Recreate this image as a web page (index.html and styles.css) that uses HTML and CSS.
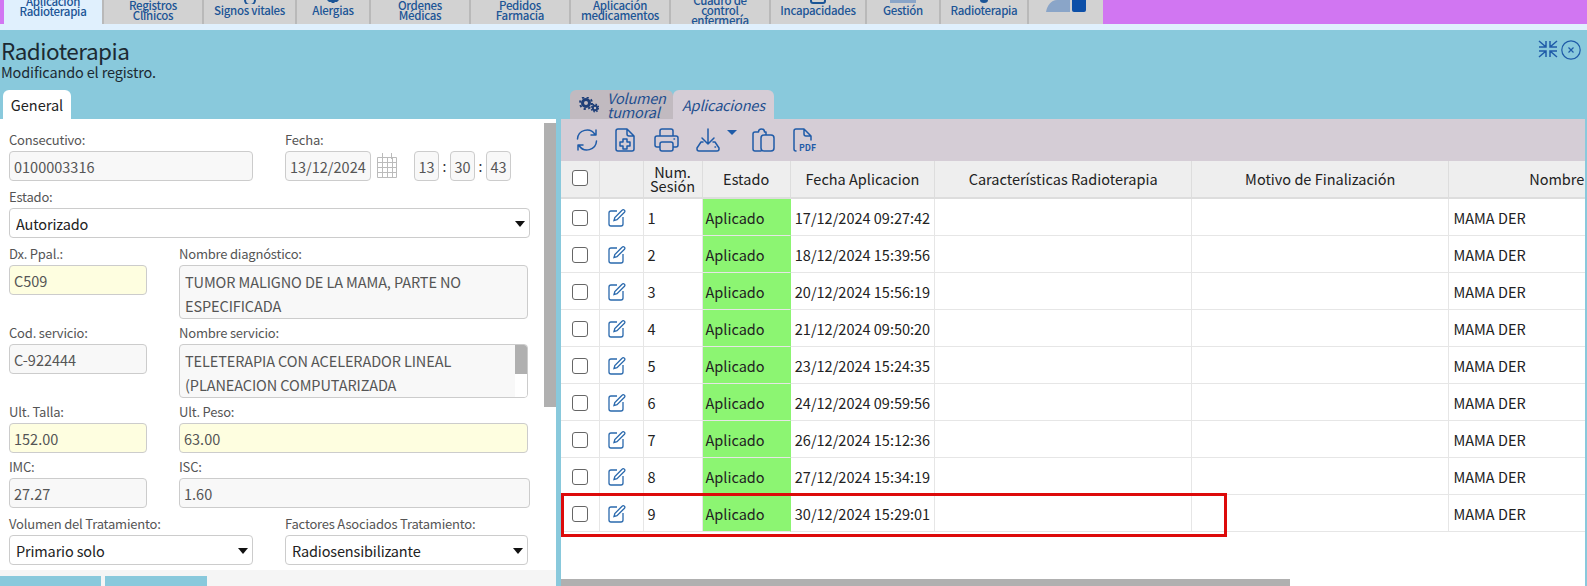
FILE: index.html
```html
<!DOCTYPE html>
<html lang="es">
<head>
<meta charset="utf-8">
<title>Radioterapia</title>
<link rel="stylesheet" href="styles.css">
</head>
<body>
<nav class="nav">
  <a class="tab active t-a">Aplicación Radioterapia</a>
  <a class="tab t-b">Registros Clínicos</a>
  <a class="tab t-c"><svg class="peek" width="14" height="4" viewBox="0 0 14 4"><path d="M2 0a5 5 0 0 0 10 0" fill="none" stroke="#1c5596" stroke-width="2"/></svg>Signos vitales</a>
  <a class="tab t-d"><svg class="peek" width="14" height="3" viewBox="0 0 14 3"><path d="M1 0h12l-2 2H9L8 3H6L5 2H3z" fill="#1c5596"/></svg>Alergias</a>
  <a class="tab t-e">Ordenes Médicas</a>
  <a class="tab t-f">Pedidos Farmacia</a>
  <a class="tab t-e">Aplicación medicamentos</a>
  <a class="tab t-e t-tight">Cuadro de control enfermería</a>
  <a class="tab t-g"><svg class="peek" width="16" height="4" viewBox="0 0 16 4"><path d="M1 0v1a2 2 0 0 0 2 2h10a2 2 0 0 0 2-2V0" fill="none" stroke="#1c5596" stroke-width="2"/></svg>Incapacidades</a>
  <a class="tab t-h"><svg class="peek" width="26" height="3" viewBox="0 0 26 3"><path d="M0 0h26v3H0z" fill="#8aa5c8"/></svg>Gestión</a>
  <a class="tab t-i"><svg class="peek" width="8" height="3" viewBox="0 0 8 3"><path d="M0 0h8a4 3 0 0 1-8 0z" fill="#1c5596"/></svg>Radioterapia</a>
  <a class="tab t-j"><svg class="user" width="40" height="12" viewBox="0 0 40 12"><path d="M0 12C1 6 5 0 11 0h13v12z" fill="#8aa5c8"/><path d="M26 0h14v10a2 2 0 0 1-2 2H28a2 2 0 0 1-2-2z" fill="#0c4fa8"/></svg></a>
</nav>
<div class="strip"></div>
<main class="main">
  <header class="head">
    <div>
      <h1 class="title">Radioterapia</h1>
      <p class="subtitle">Modificando el registro.</p>
    </div>
    <div class="head-icons">
      <svg width="20" height="18" viewBox="0 0 20 18" fill="none" stroke="#1f5ba8" stroke-width="1.5"><path d="M8 1v6H1M8 7 1 1M12 1v6h7M12 7l7-6M8 17v-6H1M8 11l-7 6M12 17v-6h7M12 11l7 6"/></svg>
      <svg width="20" height="20" viewBox="0 0 20 20" fill="none" stroke="#1f5ba8" stroke-width="1.2"><circle cx="10" cy="10" r="9.2"/><path d="m7.500 7.500 5 5m0-5-5 5"/></svg>
    </div>
  </header>
  <div class="columns">
    <section class="left">
      <div class="tabs"><span class="ltab">General</span></div>
      <div class="panel">
        <form class="form">
          <div class="row r-half gap7">
            <div class="field"><label>Consecutivo:</label><input class="inp" readonly value="0100003316"></div>
            <div class="field">
              <label>Fecha:</label>
              <div class="dt">
                <input class="inp date" readonly value="13/12/2024">
                <svg class="cal" width="20" height="27" viewBox="0 0 20 27" fill="none" stroke="#bbb" stroke-width="1"><path d="M.5 5.500h19v20H.5zM.5 10.500h19M.5 15.500h19M.5 20.500h19M5.500 5.500v20M10.500 5.500v20M15.500 5.500v20M5.500 1v6M14.500 1v6"/></svg>
                <input class="inp time t1" readonly value="13"><span class="colon">:</span><input class="inp time" readonly value="30"><span class="colon">:</span><input class="inp time" readonly value="43">
              </div>
            </div>
          </div>
          <div class="field gap7 r-full"><label>Estado:</label><div class="sel"><select><option>Autorizado</option></select></div></div>
          <div class="row r-narrow gap5">
            <div class="field"><label>Dx. Ppal.:</label><input class="inp yellow" readonly value="C509"></div>
            <div class="field"><label>Nombre diagnóstico:</label><div class="area a-short">TUMOR MALIGNO DE LA MAMA, PARTE NO ESPECIFICADA</div></div>
          </div>
          <div class="row r-narrow gap5">
            <div class="field"><label>Cod. servicio:</label><input class="inp" readonly value="C-922444"></div>
            <div class="field"><label>Nombre servicio:</label><div class="area a-scroll"><div class="area-text">TELETERAPIA CON ACELERADOR LINEAL (PLANEACION COMPUTARIZADA</div><div class="area-bar"><i></i></div></div></div>
          </div>
          <div class="row r-narrow gap5">
            <div class="field"><label>Ult. Talla:</label><input class="inp yellow" readonly value="152.00"></div>
            <div class="field"><label>Ult. Peso:</label><input class="inp yellow" readonly value="63.00"></div>
          </div>
          <div class="row r-wide gap7">
            <div class="field"><label>IMC:</label><input class="inp" readonly value="27.27"></div>
            <div class="field"><label>ISC:</label><input class="inp" readonly value="1.60"></div>
          </div>
          <div class="row r-half">
            <div class="field"><label>Volumen del Tratamiento:</label><div class="sel"><select><option>Primario solo</option></select></div></div>
            <div class="field f-short"><label>Factores Asociados Tratamiento:</label><div class="sel"><select><option>Radiosensibilizante</option></select></div></div>
          </div>
        </form>
        <div class="vbar"></div>
      </div>
      <div class="foot"><span class="fbtn b1"></span><span class="fbtn b2"></span></div>
    </section>
    <section class="right">
      <div class="rtabs">
        <span class="rtab off">
          <svg width="20" height="16" viewBox="0 0 20 16" fill="none" stroke="#1f3f78"><circle cx="7" cy="6" r="3.500" stroke-width="3"/><circle cx="7" cy="6" r="6" stroke-width="2" stroke-dasharray="2.200 2.500"/><circle cx="16" cy="11" r="2.200" stroke-width="2"/><circle cx="16" cy="11" r="3.800" stroke-width="1.400" stroke-dasharray="1.500 1.500"/></svg>
          <em>Volumen<br>tumoral</em>
        </span>
        <span class="rtab on"><em>Aplicaciones</em></span>
      </div>
      <div class="toolbar">
        <svg class="ic m14" width="24" height="24" viewBox="0 0 24 24"><path d="M2.500 11A9.500 9.500 0 0 1 20 6.500M21 2v5h-5M21.500 13A9.500 9.500 0 0 1 4 17.500M3 22v-5h5"/></svg>
        <svg class="ic m16" width="20" height="24" viewBox="0 0 20 24"><path d="M4 1h8l7 7v13a2 2 0 0 1-2 2H3a2 2 0 0 1-2-2V3a2 2 0 0 1 2-2zM12 1v5a2 2 0 0 0 2 2h5M8 11h4v3h3v4h-3v3H8v-3H5v-4h3z"/></svg>
        <svg class="ic m19" width="25" height="24" viewBox="0 0 25 24"><path d="M6 8V3a2 2 0 0 1 2-2h9a2 2 0 0 1 2 2v5M6 19H3a2 2 0 0 1-2-2v-7a2 2 0 0 1 2-2h19a2 2 0 0 1 2 2v7a2 2 0 0 1-2 2h-3M8 14h9a2 2 0 0 1 2 2v5a2 2 0 0 1-2 2H8a2 2 0 0 1-2-2v-5a2 2 0 0 1 2-2zM20 11h.5"/></svg>
        <svg class="ic m17" width="24" height="24" viewBox="0 0 24 24"><path d="M12 1v15M6 10l6 6 6-6M7 14H5l-4 6v1a2 2 0 0 0 2 2h18a2 2 0 0 0 2-2v-1l-4-6h-2M19 19h.5"/></svg>
        <span class="caret"></span>
        <svg class="ic m14" width="24" height="24" viewBox="0 0 24 24"><path d="M6 4H4a2 2 0 0 0-2 2v15a2 2 0 0 0 2 2h6M6 4h1.500a3 3 0 0 1 6 0H15v3M14 7h6a3 3 0 0 1 3 3v10a3 3 0 0 1-3 3h-7a3 3 0 0 1-3-3V10a3 3 0 0 1 3-3z"/></svg>
        <svg class="ic m18" width="24" height="24" viewBox="0 0 24 24"><path d="M3 23a2 2 0 0 1-2-2V3a2 2 0 0 1 2-2h8l7 7v4M11 1v5a2 2 0 0 0 2 2h5"/><text class="pdf" x="6" y="23" textLength="17" lengthAdjust="spacingAndGlyphs">PDF</text></svg>
      </div>
      <div class="grid-wrap">
        <table class="grid">
          <colgroup><col class="c1"><col class="c2"><col class="c3"><col class="c4"><col class="c5"><col class="c6"><col class="c7"><col class="c8"></colgroup>
          <thead>
            <tr><th><input type="checkbox" class="chk chk-head"></th><th></th><th class="tight">Num. Sesión</th><th>Estado</th><th>Fecha Aplicacion</th><th>Características Radioterapia</th><th>Motivo de Finalización</th><th>Nombre</th></tr>
          </thead>
          <tbody id="rows"></tbody>
        </table>
        <div class="mark"></div>
      </div>
      <div class="hbar-track"><div class="hbar"></div></div>
    </section>
  </div>
</main>
<script src="rows.js"></script>
</body>
</html>
```
FILE: rows.js
```js
var dates = ["17/12/2024 09:27:42","18/12/2024 15:39:56","20/12/2024 15:56:19","21/12/2024 09:50:20","23/12/2024 15:24:35","24/12/2024 09:59:56","26/12/2024 15:12:36","27/12/2024 15:34:19","30/12/2024 15:29:01"];
var pencil = '<svg class="pen" width="18" height="19" viewBox="0 0 18 19" fill="none" stroke="#2a69ad" stroke-width="1.300"><path d="M9 3H3a2 2 0 0 0-2 2v11a2 2 0 0 0 2 2h10a2 2 0 0 0 2-2V9"/><path d="M6 12.500l.8-3L14.300 2a1.300 1.300 0 0 1 1.900 0l.3.300a1.300 1.300 0 0 1 0 1.900L9 11.700z"/></svg>';
document.getElementById("rows").innerHTML = dates.map(function (d, i) {
  return '<tr><td class="mid"><input type="checkbox" class="chk chk-row"></td><td class="mid pen-cell">' + pencil + '</td><td>' + (i + 1) + '</td><td class="ok">Aplicado</td><td class="nowrap">' + d + '</td><td></td><td></td><td>MAMA DER</td></tr>';
}).join("");
```
FILE: styles.css
```css
* { box-sizing: border-box; }
html, body { margin: 0; height: 586px; overflow: hidden; }
body { font-family: "Noto Sans CJK SC", "Noto Sans", sans-serif; font-size: 14px; color: #222; background: #fff; }

.nav { display: flex; height: 24px; padding-left: 4px; background: #d176f2; overflow: hidden; }
.tab { position: relative; display: flex; align-items: center; justify-content: center; height: 24px; padding: 0 6px 5px; background: #d2d2d2; border-right: 2px solid #b9b9b9; color: #1c5596; font-size: 11.500px; font-weight: 500; letter-spacing: -0.3px; line-height: 10px; text-align: center; }
.tab.active { background: #e0f0fd; padding-bottom: 13px; padding-left: 16px; padding-right: 16px; }
.t-a { width: 100px; } .t-b { width: 100px; } .t-c { width: 93px; } .t-d { width: 74px; }
.t-e { width: 100px; } .t-f { width: 100px; } .t-g { width: 96px; } .t-h { width: 74px; }
.t-i { width: 88px; } .t-j { width: 74px; border-right: 0; }
.t-tight { padding-left: 18px; padding-right: 18px; }
.peek { position: absolute; top: 0; left: 50%; transform: translateX(-50%); }
.user { position: absolute; top: 0; left: 17px; }

.strip { height: 6px; background: #e0f0fd; }
.main { height: 556px; background: #89c9dc; }
.head { display: flex; justify-content: space-between; height: 60px; padding: 8px 6px 0 0; }
.title { margin: 0 0 0 1px; font-size: 22.500px; font-weight: 400; letter-spacing: -0.5px; line-height: 25px; color: #1c2a33; }
.subtitle { margin: 0 0 0 1px; font-size: 14.500px; letter-spacing: -0.15px; line-height: 17px; color: #1c2a33; }
.head-icons { display: flex; gap: 3px; align-items: flex-start; margin-top: 2px; }

.columns { display: flex; height: 496px; gap: 5px; }
.left { width: 556px; display: flex; flex-direction: column; flex: none; }
.tabs { height: 29px; padding-left: 3px; display: flex; }
.ltab { width: 68px; height: 29px; background: #fff; border-radius: 6px 6px 0 0; line-height: 29px; text-align: center; font-size: 14.500px; color: #222; }
.panel { flex: none; height: 451px; background: #fff; display: flex; }
.form { width: 544px; padding: 12px 0 0 9px; }
.vbar { width: 12px; height: 284px; margin-top: 4px; background: #b0b0b0; }
.foot { flex: 1; background: #f5f5f5; display: flex; gap: 4px; padding-top: 6px; overflow: hidden; }
.fbtn { display: block; height: 16px; background: #89c9dc; }
.b1 { width: 101px; } .b2 { width: 102px; }

.row { display: grid; column-gap: 32px; }
.r-half { grid-template-columns: 244px 245px; }
.r-narrow { grid-template-columns: 138px 349px; }
.r-wide { grid-template-columns: 138px 351px; }
.r-full { width: 521px; }
.gap7 { margin-bottom: 7px; }
.gap5 { margin-bottom: 5px; }
.field { min-width: 0; }
.f-short { width: 243px; }
label { display: block; height: 20px; line-height: 18px; font-size: 13px; letter-spacing: -0.2px; color: #555; }

.inp { display: block; width: 100%; height: 30px; padding: 0 4px; border: 1px solid #ccc; border-radius: 4px; background: #f8f8f8; font: inherit; font-size: 14.500px; color: #555; outline: none; }
.yellow { background: #fefee0; }
.dt { display: flex; align-items: center; }
.date { width: 86px; flex: none; }
.cal { margin: -2px 0 0 6px; flex: none; }
.time { width: 25px; flex: none; padding: 0; text-align: center; }
.t1 { margin-left: 17px; }
.colon { width: 11px; text-align: center; color: #333; font-size: 14px; }

.sel { position: relative; }
.sel select { display: block; width: 100%; height: 30px; padding: 0 6px; border: 1px solid #ccc; border-radius: 4px; background: #fff; appearance: none; font: inherit; font-size: 14.500px; letter-spacing: -0.15px; color: #222; }
.sel::after { content: ""; position: absolute; right: 5px; top: 13px; border: 5px solid transparent; border-top: 6px solid #111; border-bottom: 0; }

.area { border: 1px solid #ccc; border-radius: 4px; background: #f8f8f8; color: #555; font-size: 14.500px; letter-spacing: -0.1px; line-height: 24px; overflow: hidden; }
.a-short { height: 54px; padding: 4px 5px 0; }
.a-scroll { height: 54px; display: flex; }
.area-text { flex: 1; padding: 4px 5px 0; }
.area-bar { width: 12px; background: #fff; flex: none; }
.area-bar i { display: block; height: 29px; background: #b0b0b0; }

.right { flex: 1; display: flex; flex-direction: column; margin-right: 2px; min-width: 0; }
.rtabs { display: flex; height: 29px; padding-left: 9px; }
.rtab { display: flex; align-items: center; height: 29px; border-radius: 6px 6px 0 0; color: #1f4f8f; overflow: hidden; }
.rtab em { font-size: 14.500px; letter-spacing: -0.2px; line-height: 14px; }
.off { width: 103px; background: #c1bac0; padding: 0 0 0 9px; gap: 8px; }
.on { width: 101px; background: #d5cdd6; padding-left: 9px; }
.on em { line-height: 29px; }

.toolbar { display: flex; align-items: flex-start; height: 42px; padding-top: 9px; background: #d5cdd6; }
.ic { flex: none; fill: none; stroke: #1f5ba8; stroke-width: 1.5; stroke-linecap: round; stroke-linejoin: round; }
.m14 { margin-left: 14px; } .m16 { margin-left: 16px; } .m17 { margin-left: 17px; } .m18 { margin-left: 18px; } .m19 { margin-left: 19px; }
.caret { margin: 2px 0 0 7px; border: 5px solid transparent; border-top: 5px solid #1f5ba8; border-bottom: 0; }
.pdf { font-size: 9px; font-weight: 700; fill: #1f5ba8; stroke: none; }

.grid-wrap { position: relative; flex: 1; background: #fff; overflow: hidden; }
.grid { border-collapse: separate; border-spacing: 0; table-layout: fixed; width: 1103px; }
.c1 { width: 39px; } .c2 { width: 43.500px; } .c3 { width: 59px; } .c4 { width: 88.300px; }
.c5 { width: 144.300px; } .c6 { width: 257px; } .c7 { width: 257.400px; } .c8 { width: 214.500px; }
.grid th { height: 38px; padding: 0; background: #eee; border-right: 1px solid #ddd; border-bottom: 2px solid #ddd; font-size: 14.500px; font-weight: 400; line-height: 14px; color: #222; text-align: center; }
.grid th:last-child { border-right: 0; }
.grid td { height: 37px; padding: 0 0 0 4px; border-right: 1px solid #e6e6e6; border-bottom: 1px solid #e6e6e6; font-size: 14.500px; color: #222; }
.grid td.mid { padding: 0; text-align: center; }
.grid td.pen-cell { padding-right: 8px; }
.grid td.ok { background: #8cf572; border-right-color: #8cf572; padding-left: 3px; }
.nowrap { white-space: nowrap; }
.chk { display: block; width: 16px; height: 16px; margin: 0 auto; appearance: none; background: #fff; border: 1px solid #666; border-radius: 3px; }
.chk-head { position: relative; top: -1px; }
.chk-row { position: relative; top: 1px; }
.pen { display: block; margin: 0 auto; }
.mark { position: absolute; left: 0; top: 332px; width: 666px; height: 44px; border: 3px solid #dd0a0a; }
.hbar-track { flex: none; height: 7px; background: #fff; }
.hbar { width: 729px; height: 7px; background: #b0b0b0; }
```
